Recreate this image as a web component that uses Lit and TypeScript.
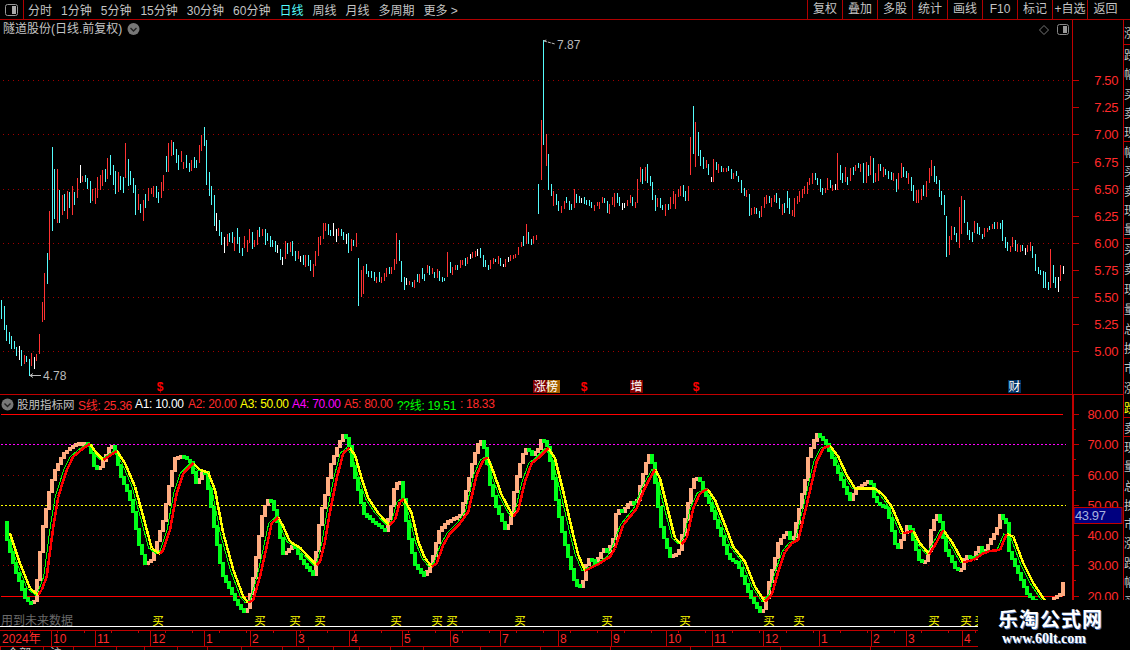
import { LitElement, html, svg, css } from "lit";
import { customElement } from "lit/decorators.js";

// bars are read off 3x crops: "x,top,bottom+colour", relative to the crop origin
const BAR_SEGMENTS: [number, number, string][] = [
    [0, 120, `4,540,596c 13,558,630c 19,615,663c 28,636,672c 34,648,687c 43,663,687c 49,681,708c 58,678,720w 64,690,738c 73,705,732r 79,708,726c 88,717,768c 94,699,738r 103,711,747w 109,702,723r 118,642,702r 127,546,606r 133,459,600r 142,399,492c 148,273,420r 157,81,333c 163,147,297c 172,147,309r 178,210,309c 187,225,285r 193,222,273c 202,213,297r 208,216,264c 217,198,285r 223,216,255c 232,174,234r 241,135,189w 247,168,186r 256,165,186c 262,174,207c 271,183,249c 277,207,243r 286,204,252r 292,171,234r 301,165,210r 307,150,198r 316,147,186c 322,114,177r 331,105,165c 340,135,195c 346,153,222c 355,156,216r 361,168,210c 370,171,219c 376,69,174r 385,117,198c 391,153,195c 400,174,219c 406,195,285c 415,222,270r 421,252,279c 430,240,303r 436,222,264c 445,204,243r 454,204,222r 460,198,231r 469,198,234c 475,216,249c 484,186,234r 490,165,213r 499,108,156c 505,69,156r 514,60,108r 520,66,105c 529,87,129c 535,105,150c 544,93,126r 550,126,147r 559,105,144c 568,129,156c 574,120,153r 583,111,144c 589,120,144c 598,75,129r 604,45,93r 613,21,78c 619,60,195c 628,156,228c 634,198,255c 643,225,318c 649,279,333w 658,300,348c 664,336,375c 673,351,399w 682,342,378r 688,339,366c 697,336,369c 703,351,393r 712,324,372c 718,351,399c 727,384,408c 733,348,384r 742,360,396r 748,327,369r 757,336,387c 763,360,381r 772,330,375r 778,321,351c 787,327,348r 796,327,375c 802,339,363c 811,348,381c 817,360,381c 826,363,396c 832,375,399w`],
    [280, 30, `1,657,690c 7,681,705w 16,633,687r 22,639,672c 31,636,666r 37,633,678c 46,663,693c 55,663,687r 61,678,696w 70,675,705c 76,675,711r 85,675,708c 91,690,723c 100,702,741r 106,663,708r 115,621,678r 121,618,645r 130,579,627r 136,579,603r 145,582,615c 151,600,618c 160,579,618w 169,597,636w 175,594,618r 184,597,618c 190,606,630c 199,612,642w 205,609,669c 214,627,663r 220,630,648c 229,609,651r 235,684,828c 244,720,801r 250,708,792r 259,702,732c 265,723,741c 274,723,744c 283,726,753c 289,741,759r 298,726,756c 304,741,759r 313,729,753r 319,714,741r 328,711,732c 334,711,732r 343,687,720r 349,609,702r 358,630,693c 364,693,756c 373,741,780c 379,744,765w 388,753,765r 397,756,771c 403,750,774r 412,732,756c 418,732,759r 427,714,747c 433,732,753c 442,705,729r 448,708,735c 457,714,732r 463,726,744c 472,717,744r 478,723,753c 487,741,756c 493,744,753c 502,666,741r 511,696,729c 517,711,735r 526,705,720r 532,705,720c 541,690,714r 547,690,705r 556,684,708c 562,681,702r 571,672,687w 577,666,684r 586,663,681r 592,657,678w 601,654,684c 610,675,711c 616,690,711c 625,705,720c 631,690,717r 640,684,702r 646,687,696c 655,678,702r 661,684,708c 670,702,711w 676,687,711r 685,681,696w 691,675,693r 700,675,687r 706,672,684r 715,651,675r 724,636,651r 730,618,648c 739,582,642r 745,606,642c 754,627,645c 760,618,642r 769,615,630r 775,462,552c 784,270,450r 790,30,345c 799,312,408r 805,372,480c 814,462,498c 820,483,528r 829,492,525c 835,513,543c`],
    [560, 90, `4,348,369r 13,333,357r 19,321,339c 28,333,360c 34,342,360c 43,297,354r 49,312,339c 58,318,339c 64,324,339w 73,321,342c 79,330,345c 88,330,348c 94,336,354c 103,345,363r 112,336,348r 118,336,357r 127,321,339r 133,324,339c 142,333,369c 148,342,372r 157,321,345r 163,309,351r 172,309,339c 178,321,348c 187,339,360w 193,339,354w 202,330,348r 211,315,339r 217,321,348c 226,336,354r 232,267,339r 241,231,276r 247,237,282c 256,231,273r 262,222,279c 271,258,288c 277,276,330c 286,315,363c 292,324,351r 301,324,354c 307,345,360c 316,342,378r 325,342,360c 331,321,357r 340,303,342r 346,312,357r 355,297,321r 361,288,318r 370,285,321c 376,303,333c 385,288,333r 391,141,255r 400,48,192c 406,96,231r 415,126,198c 421,180,228c 430,201,237c 439,210,234r 445,222,255c 454,261,276w 460,207,276r 469,216,240c 475,222,249r 484,228,246c 490,234,246r 499,234,246r 505,228,243c 514,237,267c 520,249,267r 529,243,258c 535,258,276c 544,270,309c 553,294,318c 559,300,321r 568,312,378c 574,354,375r 583,351,372r 589,354,372c 598,363,384c 604,348,381r 613,321,354r 619,315,342r 628,318,339c 634,324,351r 643,315,336r 649,309,339c 658,324,357c 667,342,375r 673,339,369c 682,303,354c 688,324,372c 697,360,378r 703,324,381r 712,318,342r 718,303,336r 727,297,324r 733,288,312r 742,276,312r 748,264,285r 757,249,282r 766,249,270c 772,264,285c 781,267,306c 787,294,315c 796,294,309r 802,264,300r 811,270,294c 817,285,303r 826,282,300w 832,189,300r`],
    [840, 130, `1,105,150c 7,129,159c 16,111,156r 22,141,165c 31,114,153r 40,111,135c 46,105,123r 55,99,114c 61,102,126r 70,99,159c 79,96,159r 85,105,138c 91,78,135r 100,84,159c 106,129,156r 115,102,153r 121,102,123c 130,111,141r 136,117,135c 145,123,147c 154,126,150c 160,129,153r 169,147,186c 175,129,177r 184,99,144r 190,111,141c 199,123,144c 205,129,162r 214,141,183c 220,165,213c 229,180,219r 235,180,219r 244,177,210r 250,165,198c 259,153,201r 268,114,159r 274,90,138r 283,108,156c 289,138,162c 298,150,201c 304,183,225c 313,195,255c 319,258,381c 328,318,375r 334,288,330r 343,291,315c 349,309,336c 358,231,354r 364,198,312r 373,210,279c 382,276,315c 388,300,330c 397,306,336c 403,273,309r 412,279,312c 418,291,315c 427,312,327c 433,294,321r 442,294,306r 448,288,300c 457,282,297r 463,276,297c 472,276,297r 481,279,297c 487,270,333c 496,321,354c 502,336,363c 511,348,366r 517,321,351r 526,330,363c 532,342,366r 541,345,366r 547,345,363c 556,354,375w 562,345,366r 571,336,363r 577,348,384c 586,372,423c 595,411,432c 601,420,435c 610,423,474c 616,426,474c 625,456,480c 631,357,474r 640,405,459c 646,441,474c 655,441,486w 661,405,453r 670,408,432w`],
];

const barPaths: Record<string, string> = { c: "", r: "", w: "" };
for (const [x0, y0, text] of BAR_SEGMENTS) {
    for (const tok of text.split(" ")) {
        const m = tok.match(/(\d+),(\d+),(\d+)([crw])/)!;
        const x = x0 + Math.floor(+m[1] / 3) + 0.5;
        barPaths[m[4]] += `M${x} ${Math.round(y0 + +m[2] / 3)}V${Math.round(y0 + +m[3] / 3)}`;
    }
}

type Pt = [number, number];
const crop = (x0: number, y0: number, text: string): Pt[] =>
    text.split(" ").map((p) => {
        const [x, y] = p.split(",").map(Number);
        return [x0 + x / 3, y0 + y / 3] as Pt;
    });

const MAIN_LINE: Pt[] = [
    ...crop(0, 420, "30,340 60,430 90,505 115,525 125,510 140,470 160,320 175,230 200,150 220,110 250,85 270,72 290,100 310,120 325,110 350,93 375,130 405,200 430,290 455,385 480,402 490,390 510,330 530,220 550,160 580,130 600,150 625,158 645,210 670,340 700,450 730,530 745,548 760,540 780,470 800,380 815,310 835,292 850,320 870,365"),
    ...crop(300, 425, "0,368 25,395 50,420 60,410 75,350 90,260 110,160 130,85 148,68 165,90 185,160 205,220 235,265 268,300 285,285 300,230 312,222 335,265 355,350 375,400 395,425 410,415 430,360 450,325 480,295 505,260 530,150 550,105 563,97 580,140 605,210 640,275 655,255 675,170 695,115 720,95 745,70 765,100 790,200 815,310 835,390 855,437 880,425 900,415 930,395 945,370 970,300 1010,250 1030,200"),
    ...crop(650, 425, "0,160 15,133 30,160 55,260 75,340 95,357 110,340 130,250 150,205 172,192 195,225 225,300 250,365 285,410 315,485 345,530 365,510 385,440 405,380 425,355 445,345 470,240 500,110 520,70 540,62 565,95 590,150 615,190 675,190 700,210 725,245 760,325 790,318 810,355 838,388 855,360 880,315 905,350 940,412 970,405 1000,385 1020,378 1050,375"),
    ...crop(880, 380, "380,462 400,470 430,550 460,610 490,655 530,700"),
];

const STEP_LINE: Pt[] = [
    ...crop(0, 420, "12,305 20,355 30,395 45,450 60,490 75,535 90,552 105,540 115,440 130,310 150,200 165,150 190,100 230,70 260,68 270,85 285,150 300,140 320,100 332,70 345,100 365,180 385,220 400,280 415,370 435,432 455,420 490,300 510,180 525,115 545,107 570,125 590,195 612,140 630,240 650,370 665,460 690,510 710,550 730,578 742,565 760,470 785,290 800,240 815,243 830,300 850,405 880,375"),
    ...crop(300, 425, "0,400 15,420 40,450 60,275 75,210 90,125 110,70 130,28 145,50 155,120 175,200 190,265 225,295 255,318 270,260 285,175 300,170 305,190 315,270 330,360 345,420 375,455 400,390 415,320 440,290 480,270 500,190 520,100 540,40 555,75 570,180 590,250 615,312 630,290 645,180 665,95 680,68 695,90 715,70 725,38 740,60 755,130 770,240 790,340 810,420 825,475 838,487 850,465 860,410 870,400 885,415 910,370 920,385 940,340 950,250 965,262 990,230 1010,230 1025,160 1045,90"),
    ...crop(650, 425, "0,92 10,130 20,220 35,320 60,395 85,385 100,310 120,200 135,153 150,170 175,230 190,270 215,340 235,400 260,412 275,450 300,515 330,560 345,550 350,500 375,400 385,350 412,320 425,355 445,260 465,165 475,90 500,25 525,50 550,110 575,170 600,225 615,195 660,165 675,230 710,250 740,378 755,340 775,295 790,350 810,415 830,405 845,300 860,268 870,290 885,370 920,440 935,430 945,390 960,395 970,400 985,362 1000,385 1040,312"),
    ...crop(880, 380, "360,405 378,430 385,510 410,570 440,640 460,660 490,700 515,700 520,655 545,640 550,600"),
];

const valueAt = (line: Pt[], x: number) => {
    for (let i = 1; i < line.length; i++) {
        if (x <= line[i][0]) {
            const [x0, y0] = line[i - 1];
            const [x1, y1] = line[i];
            return y0 + ((y1 - y0) * (x - x0)) / (x1 - x0 || 1);
        }
    }
    return line[line.length - 1][1];
};

// the stepped series: overlapping blocks, coloured by direction
const STEP_DX = 3;
let stepUp = "";
let stepDown = "";
for (let x = STEP_LINE[0][0] + STEP_DX; x < 1064; x += STEP_DX) {
    const a = valueAt(STEP_LINE, x - STEP_DX);
    const b = valueAt(STEP_LINE, x);
    const top = Math.round(Math.min(a, b)) - 1;
    const h = Math.max(Math.round(Math.abs(b - a)), 2) + 2;
    const d = `M${Math.round(x) - 2} ${top}h4v${h}h-4z`;
    if (b < a) stepUp += d;
    else stepDown += d;
}

let lineRise = "";
let lineFall = "";
MAIN_LINE.slice(1).forEach(([x, y], i) => {
    const [px, py] = MAIN_LINE[i];
    const d = `M${px.toFixed(1)} ${py.toFixed(1)}L${x.toFixed(1)} ${y.toFixed(1)}`;
    if (y < py) lineRise += d;
    else lineFall += d;
});
const thinLine = "M" + MAIN_LINE.map(([x, y]) => `${(x - 3).toFixed(1)} ${y.toFixed(1)}`).join("L");

const PRICE_LEVELS: [string, number][] = [
    ["7.50", 80], ["7.25", 107], ["7.00", 134], ["6.75", 162], ["6.50", 189], ["6.25", 216],
    ["6.00", 243], ["5.75", 270], ["5.50", 297], ["5.25", 324], ["5.00", 351],
];
const IND_LEVELS: [string, number][] = [
    ["80.00", 414], ["70.00", 444], ["60.00", 475], ["50.00", 505], ["40.00", 535], ["30.00", 565], ["20.00", 596],
];
const BUY_X = [158, 260, 295, 320, 396, 437, 452, 520, 607, 685, 769, 799, 934, 966, 980];
const MONTHS: [string, number][] = [
    ["10", 52], ["11", 96], ["12", 151], ["1", 205], ["2", 251], ["3", 297], ["4", 350], ["5", 403], ["6", 451],
    ["7", 501], ["8", 559], ["9", 612], ["10", 667], ["11", 713], ["12", 764], ["1", 820], ["2", 872], ["3", 907], ["4", 963],
];
const LEGEND = [
    { w: 57, cls: "red", k: "S线:", v: "25.36" },
    { w: 53, cls: "white", k: "A1:", v: "10.00" },
    { w: 52, cls: "red", k: "A2:", v: "20.00" },
    { w: 52, cls: "yellow", k: "A3:", v: "50.00" },
    { w: 52, cls: "magenta", k: "A4:", v: "70.00" },
    { w: 53, cls: "red", k: "A5:", v: "80.00" },
    { w: 63, cls: "green", k: "??线:", v: "19.51" },
    { w: 70, cls: "red", k: ":", v: "18.33" },
];
const PERIODS = ["分时", "1分钟", "5分钟", "15分钟", "30分钟", "60分钟", "日线", "周线", "月线", "多周期", "更多 >"];
const ACTIONS = ["复权", "叠加", "多股", "统计", "画线", "F10", "标记", "+自选", "返回"];
const TABS: [number, string][] = [
    [43, "全部"], [30, "沪"], [43, ""], [28, ""], [33, ""], [30, ""], [34, ""], [41, ""], [26, ""], [25, ""],
    [26, ""], [31, ""], [33, ""], [57, ""], [60, ""], [70, ""], [80, ""], [90, ""], [90, ""], [100, ""],
];
const SIDE_GROUPS = [
    { h: 25, n: 1 }, { h: 97, n: 5 }, { h: 97, n: 5 }, { h: 179, n: 9 }, { h: 19, n: 1 }, { h: 213, n: 11 },
];
const SIDE_CHARS = "涨跌幅买卖现量总换市";

const chevron = (x: number, y: number) => svg`
    <circle cx=${x} cy=${y} r="6" fill="#777"></circle>
    <path d="M${x - 3} ${y - 1}l3 3l3 -3" fill="none" stroke="#222" stroke-width="1.4"></path>`;

@customElement("app-root")
export class AppRoot extends LitElement {
    static styles = css`
        :host {
            display: block;
            position: relative;
            width: 1130px;
            height: 650px;
            overflow: hidden;
            background: #000;
            color: #c4c4c4;
            font: 12px "Liberation Sans", "Noto Sans CJK SC", sans-serif;
        }
        svg { display: block; }
        svg text { font-family: "Liberation Sans", "Noto Sans CJK SC", sans-serif; }
        .axis-label { fill: #ff2a2a; font-size: 13px; letter-spacing: -0.4px; text-anchor: end; }

        .toolbar {
            display: flex;
            align-items: center;
            box-sizing: border-box;
            height: 20px;
            border-bottom: 1px solid #b00000;
        }
        .toggle {
            display: flex;
            align-items: center;
            justify-content: center;
            box-sizing: border-box;
            width: 24px;
            height: 19px;
            border-right: 1px solid #b00000;
        }
        .periods { display: flex; gap: 9px; padding-left: 4px; }
        .period-on { color: #54fcfc; }
        .actions { display: flex; margin-left: auto; padding-right: 7px; }
        .actions span {
            box-sizing: border-box;
            width: 35px;
            height: 19px;
            line-height: 19px;
            text-align: center;
            border-left: 1px solid #b00000;
        }
        .actions span:last-child { width: 36px; }

        .body { display: grid; grid-template-columns: 1123px 7px; }
        .panel { display: grid; grid-template-columns: 1072px 51px; }
        .panel-top { height: 375px; border-bottom: 1px solid #c00000; box-sizing: border-box; }
        .panel-ind { height: 232px; border-bottom: 1px solid #fff; box-sizing: border-box; }

        .legend { display: flex; align-items: center; height: 18px; white-space: nowrap; }
        .legend-name { width: 78px; display: flex; align-items: center; gap: 3px; padding-left: 1px; box-sizing: border-box; }
        .legend-name span { font-size: 11.5px; }
        .legend-item { display: flex; align-items: baseline; gap: 3px; letter-spacing: -0.3px; }
        .red { color: #ff2a2a; }
        .white { color: #fff; }
        .yellow { color: #ff0; }
        .magenta { color: #f0f; }
        .green { color: #0f0; }

        .dates { margin-top: 3px; }
        .tabs { display: flex; height: 3px; overflow: hidden; }
        .tabs span {
            box-sizing: border-box;
            height: 14px;
            padding-left: 6px;
            line-height: 15px;
            border-left: 1px solid #b00000;
            white-space: nowrap;
        }

        .side { box-sizing: border-box; height: 630px; border-left: 1px solid #c00000; overflow: hidden; }
        .side-group {
            display: flex;
            flex-direction: column;
            box-sizing: border-box;
            border-bottom: 1px solid #c00000;
            overflow: hidden;
        }
        .side-group div { flex: 1; display: flex; align-items: center; white-space: nowrap; }

        .watermark {
            position: absolute;
            right: 0;
            bottom: 0;
            box-sizing: border-box;
            width: 152px;
            height: 50px;
            padding: 7px 0 0 20px;
            background: #000;
            color: #fff;
            font-weight: 700;
        }
        .watermark-name {
            font-size: 20px;
            line-height: 24px;
            letter-spacing: 1px;
            font-family: "Noto Sans CJK SC", sans-serif;
            text-shadow: 1px 1px 0 #4a6fb0;
        }
        .watermark-url {
            padding-left: 4px;
            font: 700 14px/16px "Liberation Serif", serif;
            text-shadow: 1px 1px 0 #4a6fb0;
        }
    `;

    private renderToolbar() {
        return html`
            <div class="toolbar">
                <div class="toggle">
                    <svg width="13" height="12" viewBox="0 0 13 12">
                        <rect x="0.5" y="0.5" width="12" height="11" rx="2" fill="none" stroke="#999"></rect>
                        <rect x="7" y="2" width="4" height="8" fill="#aaa"></rect>
                    </svg>
                </div>
                <div class="periods">
                    ${PERIODS.map((p) => html`<span class=${p === "日线" ? "period-on" : ""}>${p}</span>`)}
                </div>
                <div class="actions">${ACTIONS.map((a) => html`<span>${a}</span>`)}</div>
            </div>
        `;
    }

    private renderKline() {
        return html`
            <svg width="1072" height="374" viewBox="0 20 1072 374">
                ${PRICE_LEVELS.filter((_, i) => i % 2 === 0).map(
                    ([, y]) => svg`<path d="M3 ${y + 0.5}H1072" stroke="#a00000" stroke-dasharray="1 4"></path>`
                )}
                <path d=${barPaths.c} stroke="#54fcfc" shape-rendering="crispEdges"></path>
                <path d=${barPaths.r} stroke="#ff3232" shape-rendering="crispEdges"></path>
                <path d=${barPaths.w} stroke="#fff" shape-rendering="crispEdges"></path>

                <text x="3" y="33" fill="#c4c4c4" font-size="12">隧道股份(日线.前复权)</text>
                ${chevron(133.5, 29)}
                <path d="M1044 25.5l4.5 4.5l-4.5 4.5l-4.5 -4.5z" fill="none" stroke="#777"></path>
                <rect x="1057.5" y="24.5" width="11" height="10" rx="2" fill="none" stroke="#888"></rect>
                <rect x="1063" y="26" width="4" height="7" fill="#999"></rect>

                <path d="M543.5 41l3 -1M544 41l11 3" stroke="#bbb" stroke-dasharray="3 1" fill="none"></path>
                <text x="557" y="49" fill="#bbb" font-size="12">7.87</text>
                <path d="M30 375.5H41M30 375.5l3 -2M30 375.5l3 2" stroke="#bbb" fill="none"></path>
                <text x="43" y="380" fill="#bbb" font-size="12">4.78</text>

                ${[160, 584, 696].map(
                    (x) => svg`<text x=${x} y="391" fill="#f00" font-size="12" font-weight="700" text-anchor="middle">$</text>`
                )}
                <rect x="533" y="380" width="14" height="13" fill="#800000"></rect>
                <rect x="547" y="380" width="13" height="13" fill="#a56000"></rect>
                <text x="534" y="391" fill="#fff" font-size="12">涨榜</text>
                <rect x="630" y="380" width="13" height="13" fill="#800000"></rect>
                <text x="630.5" y="391" fill="#fff" font-size="12">增</text>
                <rect x="1008" y="380" width="13" height="13" fill="#003366"></rect>
                <text x="1008.5" y="391" fill="#fff" font-size="12">财</text>
            </svg>
            <svg width="51" height="374" viewBox="1072 20 51 374">
                <path d="M1072.5 20V394" stroke="#c00000"></path>
                ${PRICE_LEVELS.map(
                    ([label, y]) => svg`
                        <path d="M1073 ${y + 0.5}h6" stroke="#c00000"></path>
                        <text class="axis-label" x="1118" y=${y + 5}>${label}</text>`
                )}
            </svg>
        `;
    }

    private renderIndicator() {
        return html`
            <div>
                <div class="legend">
                    <div class="legend-name">
                        <svg width="13" height="13" viewBox="0 0 13 13">${chevron(6.5, 6.5)}</svg>
                        <span>股朋指标网</span>
                    </div>
                    ${LEGEND.map(
                        (l) => html`
                            <div class="legend-item ${l.cls}" style="width:${l.w}px">
                                <span>${l.k}</span><span>${l.v}</span>
                            </div>`
                    )}
                </div>
                <svg width="1072" height="213" viewBox="0 413 1072 213">
                    <path d="M1 414.5H1063M1 596.5H1063" stroke="#f00"></path>
                    <path d="M1 444.5H1066" stroke="#f0f" stroke-dasharray="2 2"></path>
                    <path d="M1 505.5H1066" stroke="#ff0" stroke-dasharray="2 2"></path>
                    <path d="M3 475.5H1066M3 535.5H1066M3 565.5H1066" stroke="#a00000" stroke-dasharray="1 4"></path>
                    <path d=${stepUp} fill="#ffac80" shape-rendering="crispEdges"></path>
                    <path d=${stepDown} fill="#00ff19" shape-rendering="crispEdges"></path>
                    <path d=${thinLine} fill="none" stroke="#0f0" shape-rendering="crispEdges"></path>
                    <path d=${lineFall} fill="none" stroke="#ff0" stroke-width="2.5" shape-rendering="crispEdges"></path>
                    <path d=${lineRise} fill="none" stroke="#f00" stroke-width="2.5" shape-rendering="crispEdges"></path>
                    <text x="1" y="625" fill="#6a6a6a" font-size="12">用到未来数据</text>
                    ${BUY_X.map(
                        (x) => svg`<text x=${x} y="625" fill="#ff0" font-size="11.5" text-anchor="middle">买</text>`
                    )}
                </svg>
            </div>
            <svg width="51" height="231" viewBox="1072 395 51 231">
                <path d="M1073 395V626" stroke="#c00000" stroke-width="2"></path>
                ${IND_LEVELS.map(
                    ([label, y]) => svg`
                        <path d="M1074 ${y + 0.5}h5" stroke="#c00000"></path>
                        <path d="M1074 ${y + 15.5}h2" stroke="#c00000"></path>
                        <text class="axis-label" x="1118" y=${y + 5}>${label}</text>`
                )}
                <rect x="1074" y="507.5" width="48" height="16" fill="#00007f" stroke="#c00000"></rect>
                <text x="1075" y="520" fill="#a8b4e0" font-size="13" letter-spacing="-0.4">43.97</text>
            </svg>
        `;
    }

    private renderDates() {
        const ticks: number[] = [];
        for (let x = 30; x < 1000; x += 27) ticks.push(x);
        return html`
            <svg class="dates" width="1123" height="17" viewBox="0 630 1123 17">
                <path d="M0 630.5H1123M0 646.5H1123" stroke="#c00000"></path>
                ${ticks.map((x) => svg`<path d="M${x + 0.5} 630V633" stroke="#c00000"></path>`)}
                <text x="2" y="643" fill="#ff2a2a" font-size="12">2024年</text>
                ${MONTHS.map(
                    ([m, x]) => svg`
                        <path d="M${x - 0.5} 630V646" stroke="#c00000"></path>
                        <text x=${x + 1} y="643" fill="#ff2a2a" font-size="12">${m}</text>`
                )}
            </svg>
            <div class="tabs">${TABS.map(([w, t]) => html`<span style="width:${w}px">${t}</span>`)}</div>
        `;
    }

    private renderSide() {
        return html`
            <div class="side">
                ${SIDE_GROUPS.map(
                    (g, gi) => html`
                        <div class="side-group" style="height:${g.h}px">
                            ${Array.from({ length: g.n }, (_, i) => html`
                                <div class=${gi === 3 && i === g.n - 1 ? "yellow" : ""}>
                                    ${SIDE_CHARS[(gi + i) % SIDE_CHARS.length]}
                                </div>`)}
                        </div>`
                )}
            </div>
        `;
    }

    render() {
        return html`
            ${this.renderToolbar()}
            <div class="body">
                <div>
                    <div class="panel panel-top">${this.renderKline()}</div>
                    <div class="panel panel-ind">${this.renderIndicator()}</div>
                    ${this.renderDates()}
                </div>
                ${this.renderSide()}
            </div>
            <div class="watermark">
                <div class="watermark-name">乐淘公式网</div>
                <div class="watermark-url">www.60lt.com</div>
            </div>
        `;
    }
}
